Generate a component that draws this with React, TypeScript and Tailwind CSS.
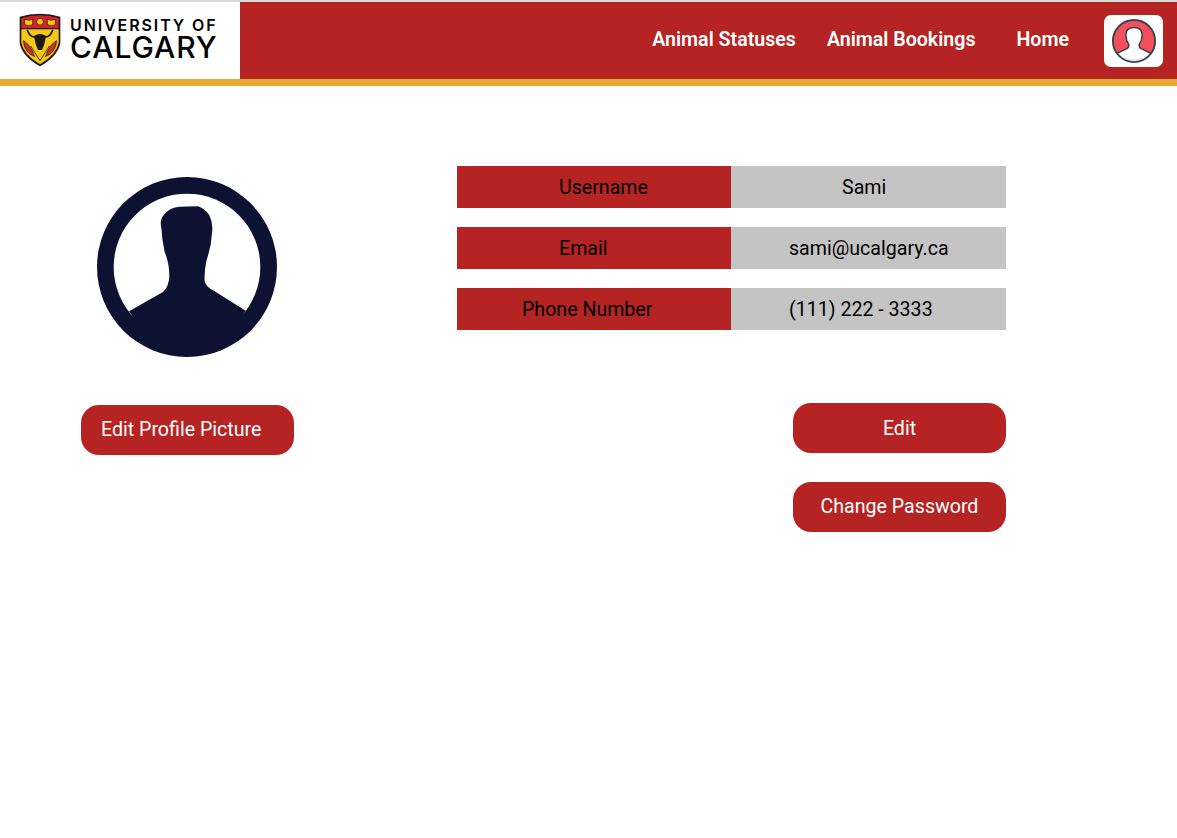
const RED = 'bg-[#b52423]'

function Shield() {
  return (
    <svg viewBox="57 42 126 160" className="h-[54px] w-[42px] shrink-0">
      <path d="M59 52 Q120 34 181 52 L181 130 Q175 170 120 201 Q65 170 59 130 Z" fill="#1c1a17" />
      <path d="M64 56 Q120 40 176 56 L176 86 L64 86 Z" fill="#d3222a" />
      <path d="M64 90 L176 90 L176 130 Q170 165 120 195 Q70 165 64 130 Z" fill="#f8c714" />
      <path d="M74 60 L86 63 L98 60 L98 76 L86 79 L74 76 Z M142 60 L154 63 L166 60 L166 76 L154 79 L142 76 Z" fill="#f8c714" stroke="#1c1a17" strokeWidth="2" />
      <circle cx="120" cy="67" r="10" fill="#f8c714" stroke="#1c1a17" strokeWidth="2" />
      <path d="M82 92 Q90 116 108 112 M158 92 Q150 116 132 112" fill="none" stroke="#1c1a17" strokeWidth="5" />
      <path d="M102 110 Q120 98 138 110 L133 134 L126 152 L114 152 L107 134 Z" fill="#1c1a17" />
      <path d="M70 124 Q92 136 104 172 L92 166 Q72 152 70 124 Z M170 124 Q148 136 136 172 L148 166 Q168 152 170 124 Z" fill="#c7322b" stroke="#1c1a17" strokeWidth="2" />
      <path d="M92 140 L120 184 L148 140" fill="none" stroke="#1c1a17" strokeWidth="2.5" />
    </svg>
  )
}

function Logo() {
  return (
    <div className="flex w-[240px] shrink-0 items-center gap-[9px] bg-white pb-[1px] pl-[19px]">
      <Shield />
      <div className="flex flex-col pb-[3px] font-['Inter',sans-serif] text-black">
        <span className="h-[18px] text-[16px] leading-[18px] font-semibold tracking-[1.9px] whitespace-nowrap">UNIVERSITY OF</span>
        <span className="h-[27px] text-[30px] leading-[27px] font-medium tracking-[0.9px]">CALGARY</span>
      </div>
    </div>
  )
}

function SmallUser() {
  return (
    <div className="flex h-[52px] w-[59px] items-center justify-center rounded-[7px] bg-white">
      <svg viewBox="0 0 48 48" className="h-[46px] w-[46px]">
        <defs>
          <clipPath id="small-circle">
            <circle cx="24" cy="24" r="22" />
          </clipPath>
        </defs>
        <circle cx="24" cy="24" r="22" fill="#f4505c" />
        <path
          d="M6 37 L16.5 32 Q19 31 18.5 27.5 Q15.5 23 15.5 18 Q15.5 10 24 10 Q32.5 10 32.5 18 Q32.5 23 29.5 27.5 Q29 31 31.5 32 L42 37 L42 48 L6 48 Z"
          fill="#fff"
          stroke="#3a4252"
          strokeWidth="1.6"
          clipPath="url(#small-circle)"
        />
        <path d="M10 40 Q24 46 38 40 Q32 46 24 46 Q16 46 10 40 Z" fill="#e6e7e9" />
        <circle cx="24" cy="24" r="22" fill="none" stroke="#3a4252" strokeWidth="2" />
      </svg>
    </div>
  )
}

function Header() {
  return (
    <header>
      <div className="h-[2px] bg-[#d9d9d9]" />
      <div className={`flex h-[77px] ${RED}`}>
        <Logo />
        <nav className="ml-auto flex items-center pr-[14px] text-[19.6px] font-semibold text-white">
          <a className="mr-[31px] pb-[2px]">Animal Statuses</a>
          <a className="mr-[41px] pb-[2px]">Animal Bookings</a>
          <a className="mr-[35px] pb-[2px]">Home</a>
          <SmallUser />
        </nav>
      </div>
      <div className="h-[7px] bg-[#e9a935]" />
    </header>
  )
}

function BigAvatar() {
  return (
    <svg viewBox="37 37 540 540" className="h-[180px] w-[180px]">
      <circle cx="307" cy="307" r="270" fill="#0e1232" />
      <circle cx="307" cy="307" r="220" fill="#fff" />
      <path
        d="M133 440 L235 382 Q252 368 254 335 Q254 295 240 262 Q232 225 230 190 Q224 165 238 150 Q255 128 285 126 L340 125 Q362 132 374 152 Q386 175 382 205 Q380 245 366 285 Q358 320 360 352 Q368 370 390 380 L483 438 L420 540 L307 560 L200 540 Z"
        fill="#0e1232"
      />
    </svg>
  )
}

function Row({ label, value, labelPad, valuePad }: { label: string; value: string; labelPad: string; valuePad: string }) {
  return (
    <div className="flex h-[42px] items-center text-[19.6px] text-black">
      <div className={`flex h-full w-[274px] items-center pt-[1px] ${RED} ${labelPad}`}>{label}</div>
      <div className={`flex h-full w-[275px] items-center bg-[#c4c4c4] pt-[1px] ${valuePad}`}>{value}</div>
    </div>
  )
}

function Pill({ children, className }: { children: string; className: string }) {
  return (
    <button className={`h-[50px] w-[213px] rounded-[18px] ${RED} text-[19.6px] text-white ${className}`}>{children}</button>
  )
}

export default function App() {
  return (
    <div className="min-h-[838px] bg-white font-['Roboto',sans-serif]">
      <Header />
      <main className="flex pt-[80px] pl-[81px]">
        <section className="w-[376px] shrink-0">
          <div className="pt-[11px] pl-[16px]">
            <BigAvatar />
          </div>
          <Pill className="mt-[48px] pb-[1px] pl-[20px] text-left">Edit Profile Picture</Pill>
        </section>
        <section className="flex w-[549px] flex-col">
          <div className="flex flex-col gap-[19px]">
            <Row label="Username" value="Sami" labelPad="pl-[102px]" valuePad="pl-[111px]" />
            <Row label="Email" value="sami@ucalgary.ca" labelPad="pl-[102px]" valuePad="pl-[58px]" />
            <Row label="Phone Number" value="(111) 222 - 3333" labelPad="pl-[65px]" valuePad="pl-[58px]" />
          </div>
          <div className="mt-[73px] flex flex-col items-end gap-[29px]">
            <Pill className="pt-[1px]">Edit</Pill>
            <Pill className="pb-[1px]">Change Password</Pill>
          </div>
        </section>
      </main>
    </div>
  )
}
